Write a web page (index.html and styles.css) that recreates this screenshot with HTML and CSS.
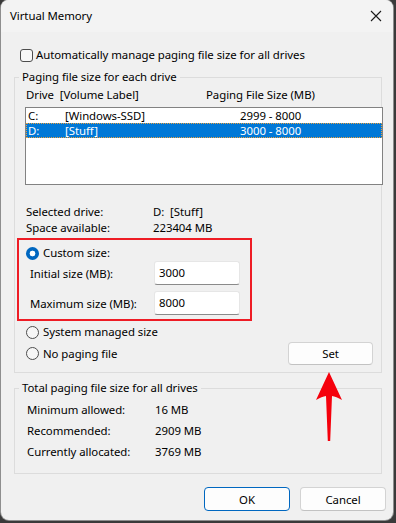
FILE: index.html
```html
<!DOCTYPE html>
<html>
<head>
<meta charset="utf-8">
<title>Virtual Memory</title>
<link rel="stylesheet" href="styles.css">
</head>
<body>
<div class="window">
  <div class="titlebar">
    <span class="title">Virtual Memory</span>
    <svg class="close" width="12" height="12" viewBox="0 0 12 12"><path d="M1 1 L11 11 M11 1 L1 11" stroke="#1a1a1a" stroke-width="1.1" fill="none"/></svg>
  </div>
  <div class="content">
    <label class="check-row"><span class="checkbox"></span>Automatically manage paging file size for all drives</label>

    <fieldset class="group group-drives">
      <legend>Paging file size for each drive</legend>
      <div class="list-header"><span class="col-drive">Drive&nbsp; [Volume Label]</span><span>Paging File Size (MB)</span></div>
      <div class="listbox">
        <div class="row"><span class="c1">C:</span><span class="c2">[Windows-SSD]</span><span>2999 - 8000</span></div>
        <div class="row selected"><span class="c1">D:</span><span class="c2">[Stuff]</span><span>3000 - 8000</span></div>
      </div>
      <div class="info">
        <div class="info-row"><span class="info-label">Selected drive:</span><span>D:&nbsp; [Stuff]</span></div>
        <div class="info-row"><span class="info-label">Space available:</span><span>223404 MB</span></div>
      </div>
      <div class="custom-box">
        <div class="radio-row radio-custom"><span class="radio checked"></span>Custom size:</div>
        <div class="field-row"><span class="field-label">Initial size (MB):</span><span class="input">3000</span></div>
        <div class="field-row field-max"><span class="field-label">Maximum size (MB):</span><span class="input">8000</span></div>
      </div>
      <div class="radio-row radio-system"><span class="radio"></span>System managed size</div>
      <div class="radio-row set-row"><span class="radio"></span>No paging file<button class="btn btn-set">Set</button></div>
    </fieldset>

    <fieldset class="group group-total">
      <legend>Total paging file size for all drives</legend>
      <div class="totals">
        <div class="total-row"><span class="total-label">Minimum allowed:</span><span>16 MB</span></div>
        <div class="total-row"><span class="total-label">Recommended:</span><span>2909 MB</span></div>
        <div class="total-row"><span class="total-label">Currently allocated:</span><span>3769 MB</span></div>
      </div>
    </fieldset>

    <div class="actions">
      <button class="btn btn-default">OK</button>
      <button class="btn">Cancel</button>
    </div>
  </div>
  <svg class="arrow" width="30" height="72" viewBox="0 0 30 72">
    <path d="M14 1 L27 29 Q21 25.5 17 25 L15.2 70 L12.8 70 L11 25 Q7 25.5 1 29 Z" fill="#f5000c"/>
  </svg>
</div>
</body>
</html>
```

FILE: styles.css
```css
* { box-sizing: border-box; }

html, body {
  margin: 0;
  padding: 0;
}

body {
  background: #3a3a3a;
  width: 396px;
  height: 523px;
  overflow: hidden;
  font-family: "Noto Sans", "Open Sans", sans-serif;
  font-size: 11.4px;
  letter-spacing: -0.05px;
  color: #000;
}

.window {
  position: relative;
  margin-left: 1px;
  width: 392px;
  height: 520px;
  background: #f0f0f0;
  border-radius: 8px;
  box-shadow: 0 0 0 1px #8e8e8e;
  overflow: hidden;
}

.titlebar {
  height: 32px;
  background: #f3f3f3;
  display: flex;
  align-items: center;
  justify-content: space-between;
  padding: 0 9px 1px 9px;
}

.title {
  line-height: 16px;
}

.close {
  margin-right: 2px;
}

.content {
  padding: 15px 7px 0 0;
}

.check-row {
  display: flex;
  align-items: center;
  height: 16px;
  line-height: 16px;
  padding-left: 19px;
}

.checkbox {
  width: 13px;
  height: 13px;
  border: 1px solid #4d4d4d;
  border-radius: 3px;
  background: #f8f8f8;
  margin-right: 3px;
}

.group {
  margin: 6px 0 0 13px;
  width: 368px;
  padding: 0;
  border: 1px solid #dcdcdc;
  min-width: 0;
}

.group legend {
  margin-left: 4px;
  padding: 0 3px;
  line-height: 16px;
  height: 16px;
}

.list-header {
  display: flex;
  margin-top: 2px;
  padding-left: 11px;
  line-height: 16px;
}

.col-drive {
  width: 180px;
}

.listbox {
  margin: 4px 0 0 10px;
  width: 358px;
  height: 78px;
  border: 1px solid #828282;
  background: #fff;
}

.row {
  display: flex;
  height: 15px;
  line-height: 15px;
  padding-left: 2px;
  overflow: hidden;
}

.row.selected {
  background: #0078d7;
  color: #fff;
  outline: 1px dotted #e8a040;
  outline-offset: -1px;
}

.c1 { width: 37px; }
.c2 { width: 175px; }

.info {
  margin-top: 19px;
  padding-left: 11px;
}

.info-row {
  display: flex;
  line-height: 16px;
}

.info-label { width: 127px; }

.custom-box {
  margin: 2px 0 0 2px;
  width: 235px;
  height: 83px;
  border: 2px solid #ee1c25;
  padding-top: 5px;
}

.radio-row {
  display: flex;
  align-items: center;
  line-height: 16px;
}

.radio-custom {
  padding-left: 7px;
}

.radio {
  width: 13px;
  height: 13px;
  border-radius: 50%;
  border: 1px solid #4d4d4d;
  background: #f6f6f6;
  margin-right: 4px;
  flex-shrink: 0;
}

.radio.checked {
  border: none;
  background: radial-gradient(circle, #fff 0 2.6px, #0067c0 3.2px);
}

.field-row {
  display: flex;
  align-items: center;
  padding-left: 11px;
}

.field-max { margin-top: 6px; }

.field-label { width: 124px; }

.input {
  width: 86px;
  height: 24px;
  line-height: 22px;
  background: #fff;
  border: 1px solid #e6e6e6;
  border-bottom-color: #8a8a8a;
  border-radius: 3px;
  padding-left: 4px;
}

.radio-system {
  margin-top: 3px;
  padding-left: 11px;
}

.set-row {
  margin-top: 2px;
  padding-left: 11px;
  padding-right: 8px;
  margin-bottom: 7px;
}

.btn {
  font-family: inherit;
  font-size: inherit;
  letter-spacing: inherit;
  color: #000;
  width: 86px;
  height: 24px;
  background: #fdfdfd;
  border: 1px solid #d3d3d3;
  border-bottom-color: #c2c2c2;
  border-radius: 4px;
  padding: 0;
}

.btn-set {
  margin-left: auto;
  width: 85px;
  height: 23px;
}

.btn-default {
  border: 1px solid #0067c0;
}

.group-total {
  margin-top: 7px;
}

.totals {
  padding: 3px 0 11px 12px;
}

.total-row {
  display: flex;
  height: 21px;
  line-height: 21px;
}

.total-label { width: 128px; }

.actions {
  display: flex;
  justify-content: flex-end;
  gap: 10px;
  margin-top: 13px;
}

.arrow {
  position: absolute;
  left: 314px;
  top: 371px;
}
```
